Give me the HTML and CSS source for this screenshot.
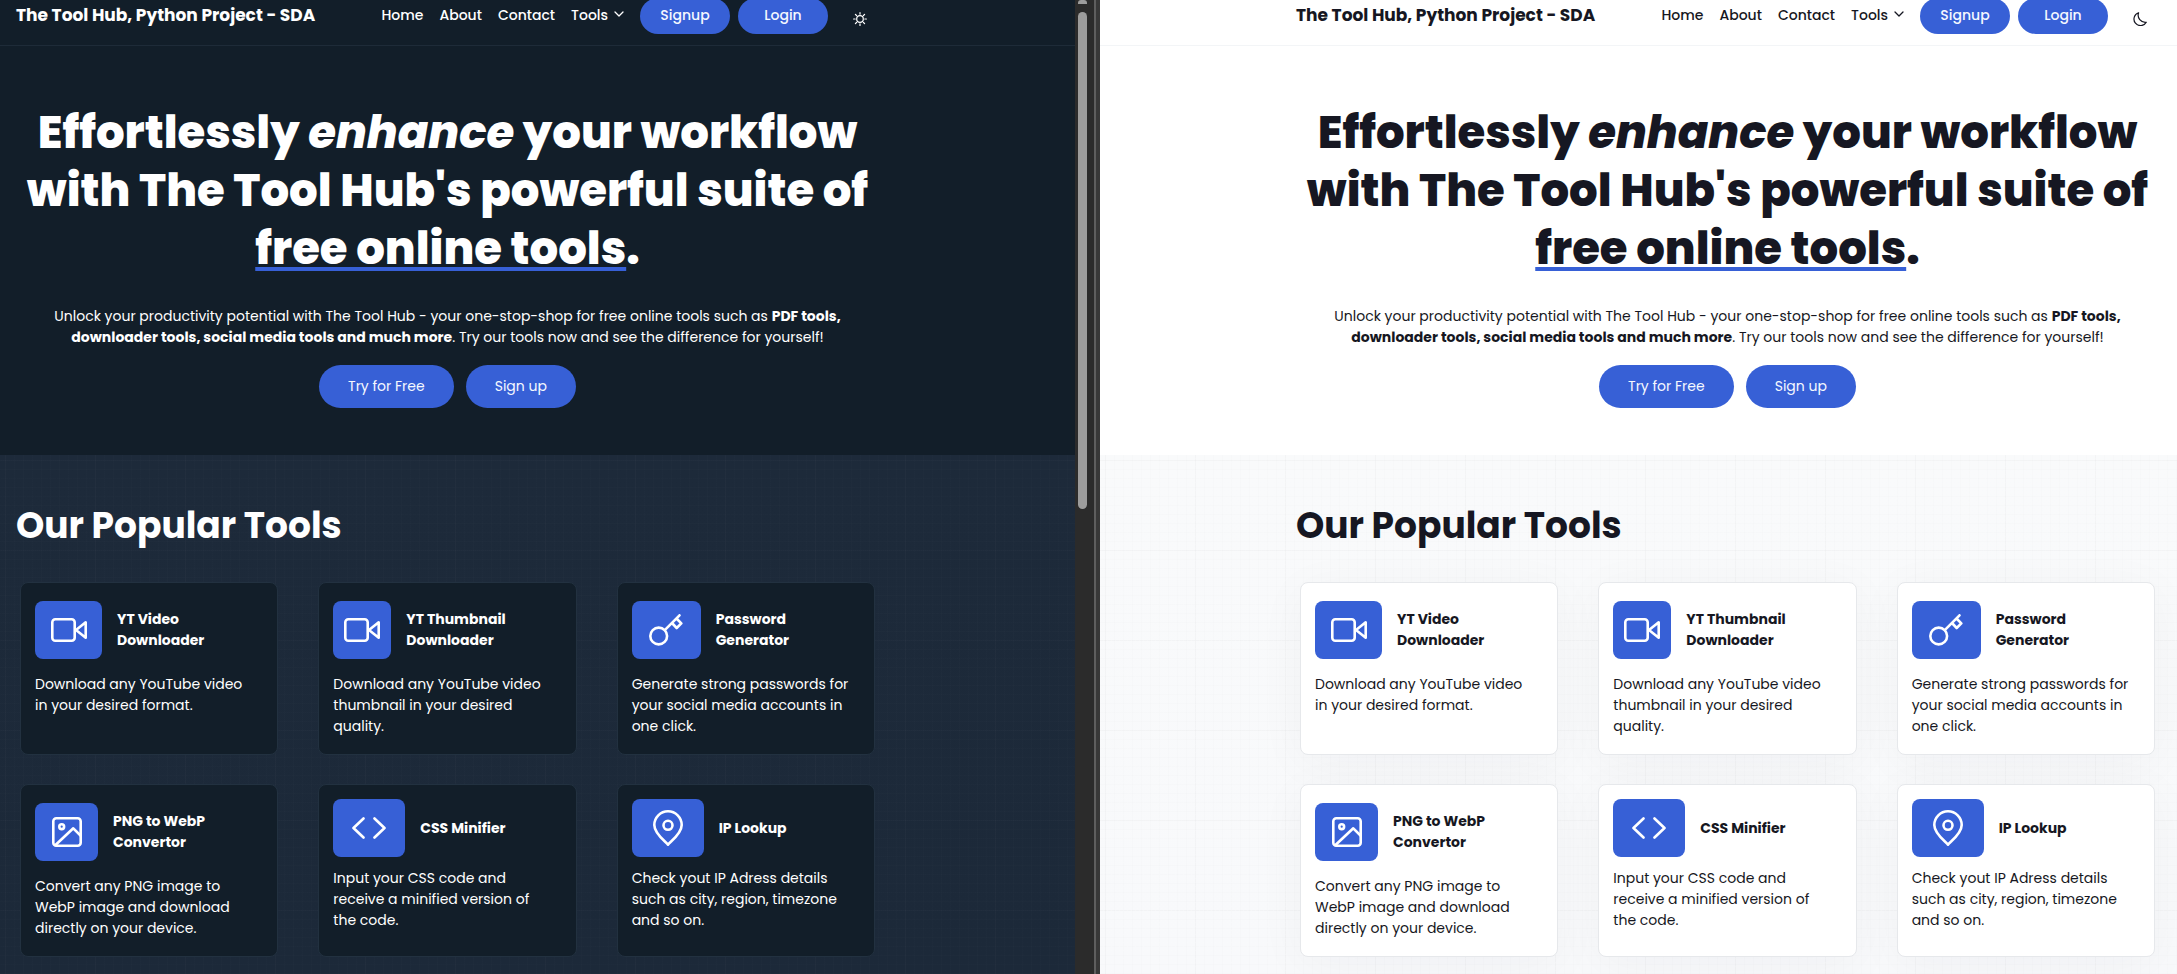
FILE: index.html
```html
<!DOCTYPE html>
<html lang="en">
<head>
<meta charset="utf-8">
<meta name="viewport" content="width=device-width, initial-scale=1">
<title>The Tool Hub</title>
<link rel="stylesheet" href="styles.css">
</head>
<body>
<svg class="sprite" aria-hidden="true">
  <symbol id="video" viewBox="0 0 36 24"><rect x="1.3" y="1.3" width="22.4" height="21.4" rx="3"/><path d="M25 12 34.7 4.3V19.7Z"/></symbol>
  <symbol id="key" viewBox="0 0 34 32"><circle cx="9.7" cy="22" r="8.4"/><path d="M16 15.8 30.5 1.3M23 9l4.7 5 4.6-4.6L28 5"/></symbol>
  <symbol id="photo" viewBox="0 0 30 30"><rect x="1.3" y="1.3" width="27.4" height="27.4" rx="3"/><circle cx="9.7" cy="9.7" r="2.4"/><path d="M3.5 28 21.3 11.3 28.5 18.5"/></symbol>
  <symbol id="code" viewBox="0 0 34 22"><path d="M11.5 1.5 1.5 11l10 9.5M22.5 1.5l10 9.5-10 9.5"/></symbol>
  <symbol id="pin" viewBox="0 0 30 36"><path d="M15 34.6C13 32 1.3 24 1.3 15a13.7 13.7 0 0 1 27.4 0C28.7 24 17 32 15 34.6Z"/><circle cx="15" cy="15.3" r="4.5"/></symbol>
  <symbol id="chevron" viewBox="0 0 10 6"><path d="M1 1l4 4 4-4"/></symbol>
  <symbol id="sun" viewBox="0 0 14 14"><circle cx="7" cy="7" r="3.3"/><path d="M7 .6v1.600M7 11.800v1.600M.6 7h1.600M11.800 7h1.600M2.400 2.400l1.100 1.100M10.500 10.500l1.100 1.100M2.400 11.600l1.100-1.100M10.500 3.500l1.100-1.100"/></symbol>
  <symbol id="moon" viewBox="0 0 14 14"><path d="M5.6.7A6.6 6.6 0 1 0 13.3 10.300A7.200 7.200 0 0 1 5.600.7Z"/></symbol>
</svg>
<div class="split">
  <div class="pane pane-dark">
    <header class="topbar">
      <div class="container topbar-row">
        <a class="brand" href="#">The Tool Hub, Python Project - SDA</a>
        <nav class="nav">
          <a href="#">Home</a><a href="#">About</a><a href="#">Contact</a>
          <button class="menu" type="button">Tools <svg class="chevron"><use href="#chevron"/></svg></button>
        </nav>
        <div class="account"><a class="pill" href="#">Signup</a><a class="pill" href="#">Login</a></div>
        <button class="toggle" type="button" aria-label="Use light theme"><svg><use href="#sun"/></svg></button>
      </div>
    </header>
    <section class="hero container">
      <h1>Effortlessly <em>enhance</em> your workflow<br>with The Tool Hub's powerful suite of<br><span class="marked">free online tools</span>.</h1>
      <p>Unlock your productivity potential with The Tool Hub - your one-stop-shop for free online tools such as <b>PDF tools,<br>downloader tools, social media tools and much more</b>. Try our tools now and see the difference for yourself!</p>
      <div class="cta"><a class="pill pill-large" href="#">Try for Free</a><a class="pill pill-large" href="#">Sign up</a></div>
    </section>
    <section class="tools">
      <div class="container">
        <h2>Our Popular Tools</h2>
        <div class="grid">
          <article class="card"><div class="card-head"><span class="tile tile-67"><svg class="i-video"><use href="#video"/></svg></span><h3>YT Video<br>Downloader</h3></div><p>Download any YouTube video<br>in your desired format.</p></article>
          <article class="card"><div class="card-head"><span class="tile tile-58"><svg class="i-video"><use href="#video"/></svg></span><h3>YT Thumbnail<br>Downloader</h3></div><p>Download any YouTube video<br>thumbnail in your desired<br>quality.</p></article>
          <article class="card"><div class="card-head"><span class="tile tile-69"><svg class="i-key"><use href="#key"/></svg></span><h3>Password<br>Generator</h3></div><p>Generate strong passwords for<br>your social media accounts in<br>one click.</p></article>
          <article class="card"><div class="card-head"><span class="tile tile-63"><svg class="i-photo"><use href="#photo"/></svg></span><h3>PNG to WebP<br>Convertor</h3></div><p>Convert any PNG image to<br>WebP image and download<br>directly on your device.</p></article>
          <article class="card"><div class="card-head"><span class="tile tile-72"><svg class="i-code"><use href="#code"/></svg></span><h3>CSS Minifier</h3></div><p>Input your CSS code and<br>receive a minified version of<br>the code.</p></article>
          <article class="card"><div class="card-head"><span class="tile tile-72"><svg class="i-pin"><use href="#pin"/></svg></span><h3>IP Lookup</h3></div><p>Check yout IP Adress details<br>such as city, region, timezone<br>and so on.</p></article>
        </div>
      </div>
    </section>
  </div>
  <div class="divider"><div class="scrollbar"><span class="arrow"></span><span class="thumb"></span></div><span class="edge"></span></div>
  <div class="pane pane-light">
    <header class="topbar">
      <div class="container topbar-row">
        <a class="brand" href="#">The Tool Hub, Python Project - SDA</a>
        <nav class="nav">
          <a href="#">Home</a><a href="#">About</a><a href="#">Contact</a>
          <button class="menu" type="button">Tools <svg class="chevron"><use href="#chevron"/></svg></button>
        </nav>
        <div class="account"><a class="pill" href="#">Signup</a><a class="pill" href="#">Login</a></div>
        <button class="toggle" type="button" aria-label="Use dark theme"><svg><use href="#moon"/></svg></button>
      </div>
    </header>
    <section class="hero container">
      <h1>Effortlessly <em>enhance</em> your workflow<br>with The Tool Hub's powerful suite of<br><span class="marked">free online tools</span>.</h1>
      <p>Unlock your productivity potential with The Tool Hub - your one-stop-shop for free online tools such as <b>PDF tools,<br>downloader tools, social media tools and much more</b>. Try our tools now and see the difference for yourself!</p>
      <div class="cta"><a class="pill pill-large" href="#">Try for Free</a><a class="pill pill-large" href="#">Sign up</a></div>
    </section>
    <section class="tools">
      <div class="container">
        <h2>Our Popular Tools</h2>
        <div class="grid">
          <article class="card"><div class="card-head"><span class="tile tile-67"><svg class="i-video"><use href="#video"/></svg></span><h3>YT Video<br>Downloader</h3></div><p>Download any YouTube video<br>in your desired format.</p></article>
          <article class="card"><div class="card-head"><span class="tile tile-58"><svg class="i-video"><use href="#video"/></svg></span><h3>YT Thumbnail<br>Downloader</h3></div><p>Download any YouTube video<br>thumbnail in your desired<br>quality.</p></article>
          <article class="card"><div class="card-head"><span class="tile tile-69"><svg class="i-key"><use href="#key"/></svg></span><h3>Password<br>Generator</h3></div><p>Generate strong passwords for<br>your social media accounts in<br>one click.</p></article>
          <article class="card"><div class="card-head"><span class="tile tile-63"><svg class="i-photo"><use href="#photo"/></svg></span><h3>PNG to WebP<br>Convertor</h3></div><p>Convert any PNG image to<br>WebP image and download<br>directly on your device.</p></article>
          <article class="card"><div class="card-head"><span class="tile tile-72"><svg class="i-code"><use href="#code"/></svg></span><h3>CSS Minifier</h3></div><p>Input your CSS code and<br>receive a minified version of<br>the code.</p></article>
          <article class="card"><div class="card-head"><span class="tile tile-72"><svg class="i-pin"><use href="#pin"/></svg></span><h3>IP Lookup</h3></div><p>Check yout IP Adress details<br>such as city, region, timezone<br>and so on.</p></article>
        </div>
      </div>
    </section>
  </div>
</div>
</body>
</html>
```
FILE: styles.css
```css
* { box-sizing: border-box; }
html, body { margin: 0; height: 100%; overflow: hidden; }
body { font: 14px/21px Poppins, Inter, sans-serif; }
h1, h2, h3, p { margin: 0; }
a { color: inherit; text-decoration: none; }
button { padding: 0; border: 0; background: none; color: inherit; font: inherit; cursor: pointer; }
svg { fill: none; stroke: currentColor; stroke-linecap: round; stroke-linejoin: round; }
.sprite { display: none; }

.split { display: grid; grid-template-columns: 1075fr 25px 1077fr; height: 100vh; overflow: hidden; }
.pane { display: flex; flex-direction: column; min-width: 0; overflow: hidden; background: var(--bg); color: var(--text); }
.pane-dark {
  --bg: #121e29; --text: #fff; --line: #1e2b38; --grid: rgba(255, 255, 255, .008); --grid-strong: rgba(255, 255, 255, .012);
  --section: linear-gradient(#1d2a3a, #1c2939); --card-line: #223140; --shadow: none;
}
.pane-light {
  --bg: #fff; --text: #161722; --line: #f3f5f7; --grid: rgba(0, 0, 0, .008); --grid-strong: rgba(0, 0, 0, .014);
  --section: linear-gradient(#f9fafb, #f8f9fb); --card-line: #e6e8eb; --shadow: 0 8px 50px rgba(20, 30, 50, .04);
}
.container { width: 100%; max-width: 895px; padding: 0 16px; }
.pane-light .container { margin-left: auto; margin-right: 2px; }

/* Header, partly scrolled out of view */
.topbar { flex: none; height: 60px; margin-top: -14px; border-bottom: 1px solid var(--line); }
.topbar-row { display: flex; align-items: center; height: 100%; white-space: nowrap; }
.brand { font-size: 17px; font-weight: 700; }
.nav { display: flex; align-items: center; gap: 16px; margin-left: auto; font-weight: 500; }
.menu { display: flex; align-items: center; gap: 6px; font-weight: 500; }
.chevron { width: 10px; height: 6px; margin-bottom: 3px; stroke-width: 1.3; }
.account { display: flex; gap: 8px; margin-left: 16px; }
.pill { display: flex; align-items: center; justify-content: center; width: 90px; height: 36px; border-radius: 24px; background: #3760d6; color: #f5f8ff; font-weight: 500; }
.toggle { display: grid; place-items: center; width: 38px; height: 38px; margin-left: 13px; padding-top: 7px; }
.toggle svg { width: 14px; height: 14px; stroke-width: 1.2; }

.hero { flex: none; padding-top: 58px; padding-bottom: 47px; text-align: center; white-space: nowrap; }
.hero h1 { font-size: 45px; line-height: 58px; font-weight: 800; }
.marked { text-decoration: underline #3760d6 4px; text-underline-offset: 3px; text-decoration-skip-ink: none; }
.hero p { margin-top: 28px; }
.cta { display: flex; justify-content: center; gap: 12px; margin-top: 17px; }
.pill-large { width: auto; height: 43px; padding: 0 29px; font-weight: 400; }

.tools {
  flex: 1 0 auto; padding: 48px 0 18px;
  background:
    repeating-linear-gradient(90deg, transparent 0 5px, var(--grid-strong) 5px 6px, transparent 6px 90px),
    repeating-linear-gradient(transparent 0 5px, var(--grid-strong) 5px 6px, transparent 6px 90px),
    repeating-linear-gradient(90deg, transparent 0 5px, var(--grid) 5px 6px, transparent 6px 9px),
    repeating-linear-gradient(transparent 0 5px, var(--grid) 5px 6px, transparent 6px 9px),
    var(--section);
}
.tools h2 { font-size: 36px; line-height: 46px; font-weight: 700; }
.grid { display: grid; grid-template-columns: repeat(3, minmax(0, 1fr)); gap: 29px 40px; margin-top: 33px; padding: 0 4px; }
.card { min-height: 173px; padding: 14px; border: 1px solid var(--card-line); border-radius: 8px; background: var(--bg); box-shadow: var(--shadow); white-space: nowrap; }
.card-head { display: flex; align-items: center; gap: 15px; }
.card h3 { padding: 12px 0; font-size: 14px; line-height: 21px; font-weight: 700; }
.card p { margin-top: 11px; }
.tile { display: grid; place-items: center; height: 58px; border-radius: 8px; background: #3760d6; color: #fff; }
.tile svg { stroke-width: 2.6; }
.tile-58 { width: 58px; }
.tile-63 { width: 63px; }
.tile-67 { width: 67px; }
.tile-69 { width: 69px; }
.tile-72 { width: 72px; }
.i-video { width: 36px; height: 24px; }
.i-key { width: 34px; height: 32px; }
.i-photo { width: 30px; height: 30px; }
.i-code { width: 34px; height: 22px; }
.i-pin { width: 30px; height: 36px; }

/* Window edge between the two panes */
.divider { display: flex; background: #2b2b2b; }
.scrollbar { display: flex; flex-direction: column; gap: 8px; width: 12px; padding-left: 3px; height: 100%; }
.arrow { width: 9px; height: 4px; border-radius: 3px 3px 0 0; background: #9c9c9c; }
.thumb { width: 9px; height: 51%; border-radius: 5px; background: #9c9c9c; }
.edge { width: 6px; margin-left: auto; border-left: 2px solid #5e5e5e; background: #383838; }
```
